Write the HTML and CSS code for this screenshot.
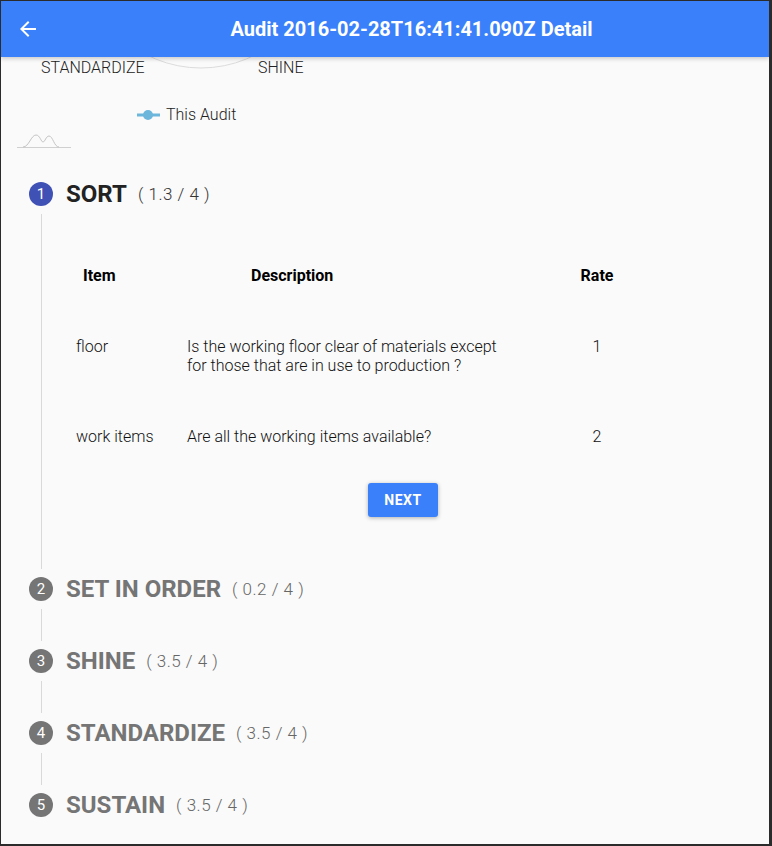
FILE: index.html
```html
<!DOCTYPE html>
<html>
<head>
<meta charset="utf-8">
<link rel="stylesheet" href="styles.css">
</head>
<body>
<div class="app">
  <header class="appbar">
    <button class="back" aria-label="Back">
      <svg viewBox="0 0 24 24" width="24" height="24"><path fill="#fff" d="M20 11H7.83l5.59-5.59L12 4l-8 8 8 8 1.41-1.41L7.83 13H20v-2z"/></svg>
    </button>
    <h1 class="title">Audit 2016-02-28T16:41:41.090Z Detail</h1>
  </header>
  <main class="content">
    <section class="chart">
      <svg class="chart-svg" width="768" height="125" viewBox="0 0 768 125">
        <circle cx="200" cy="-108" r="119" fill="none" stroke="#dcdcdc" stroke-width="1"/>
        <text x="40" y="16" class="axis-label">STANDARDIZE</text>
        <text x="257" y="16" class="axis-label">SHINE</text>
        <line x1="136" y1="58" x2="159" y2="58" stroke="#6cb6dc" stroke-width="3"/>
        <circle cx="147" cy="58" r="5" fill="#6cb6dc"/>
        <text x="165" y="63" class="legend-label">This Audit</text>
        <line x1="16" y1="90.5" x2="70" y2="90.5" stroke="#d0d0d0" stroke-width="1"/>
        <path d="M22 90 C28 90 30 78 35 78 C39 78 40 85 42 85 C44 85 45 79 48 79 C52 79 53 90 58 90" fill="none" stroke="#c4c4c4" stroke-width="1"/>
      </svg>
    </section>

    <ol class="stepper">
      <li class="step active">
        <div class="step-head">
          <span class="step-icon">1</span>
          <span class="step-name">SORT</span>
          <span class="step-score">( 1.3 / 4 )</span>
        </div>
        <div class="step-body">
          <div class="audit-table">
            <div class="row head">
              <div class="c-item">Item</div>
              <div class="c-desc">Description</div>
              <div class="c-rate">Rate</div>
            </div>
            <div class="row">
              <div class="c-item">floor</div>
              <div class="c-desc">Is the working floor clear of materials except for those that are in use to production ?</div>
              <div class="c-rate">1</div>
            </div>
            <div class="row">
              <div class="c-item">work items</div>
              <div class="c-desc">Are all the working items available?</div>
              <div class="c-rate">2</div>
            </div>
          </div>
          <div class="actions">
            <button class="next">NEXT</button>
          </div>
        </div>
      </li>
      <li class="step">
        <div class="step-head">
          <span class="step-icon">2</span>
          <span class="step-name">SET IN ORDER</span>
          <span class="step-score">( 0.2 / 4 )</span>
        </div>
        <div class="connector"></div>
      </li>
      <li class="step">
        <div class="step-head">
          <span class="step-icon">3</span>
          <span class="step-name">SHINE</span>
          <span class="step-score">( 3.5 / 4 )</span>
        </div>
        <div class="connector"></div>
      </li>
      <li class="step">
        <div class="step-head">
          <span class="step-icon">4</span>
          <span class="step-name">STANDARDIZE</span>
          <span class="step-score">( 3.5 / 4 )</span>
        </div>
        <div class="connector"></div>
      </li>
      <li class="step">
        <div class="step-head">
          <span class="step-icon">5</span>
          <span class="step-name">SUSTAIN</span>
          <span class="step-score">( 3.5 / 4 )</span>
        </div>
      </li>
    </ol>
  </main>
</div>
</body>
</html>
```

FILE: styles.css
```css
* { box-sizing: border-box; }
html, body { margin: 0; padding: 0; }
body {
  background: #2b2b2b;
  font-family: Roboto, "Liberation Sans", Arial, sans-serif;
  width: 772px;
  height: 846px;
  overflow: hidden;
}
.app {
  margin: 1px 3px 2px 1px;
  width: 768px;
  height: 843px;
  background: #fafafa;
  overflow: hidden;
  display: flex;
  flex-direction: column;
}
.appbar {
  position: relative;
  z-index: 2;
  height: 56px;
  flex: none;
  background: #3a80fa;
  display: flex;
  align-items: center;
  box-shadow: 0 2px 4px rgba(0,0,0,0.18);
}
.back {
  width: 24px;
  height: 24px;
  margin-left: 15px;
  padding: 0;
  border: 0;
  background: none;
  display: flex;
}
.title {
  flex: 1;
  margin: 0;
  padding-left: 14px;
  text-align: center;
  color: #fff;
  font-size: 20px;
  font-weight: 700;
}
.content {
  flex: 1;
  overflow: hidden;
}
.chart { height: 125px; }
.chart-svg { display: block; }
.axis-label { font-family: Roboto, sans-serif; font-size: 16px; font-weight: 300; fill: #222; }
.legend-label { font-family: Roboto, sans-serif; font-size: 16px; font-weight: 300; fill: #222; }

.stepper {
  list-style: none;
  margin: 0;
  padding: 0 0 0 28px;
}
.step-head {
  display: flex;
  align-items: center;
  height: 24px;
}
.step-icon {
  width: 24px;
  height: 24px;
  border-radius: 50%;
  background: #757575;
  color: #fff;
  font-size: 15px;
  display: flex;
  align-items: center;
  justify-content: center;
  flex: none;
}
.step.active .step-icon { background: #3f51b5; }
.step-name {
  margin-left: 13px;
  font-size: 24px;
  font-weight: 700;
  color: #757575;
}
.step.active .step-name { color: #222; }
.step-score {
  margin-left: 11px;
  font-size: 17px;
  font-weight: 300;
  color: #666;
  letter-spacing: 0.5px;
}
.step.active .step-score { color: #333; }

.connector {
  margin: 8px 0 8px 12px;
  height: 32px;
  border-left: 1px solid #d9d9d9;
}
.step-body {
  margin: 8px 0 8px 12px;
  border-left: 1px solid #d9d9d9;
  padding: 26px 0 52px 34px;
}
.audit-table { width: 620px; }
.row {
  display: grid;
  grid-template-columns: 111px 330px 160px;
  padding: 26px 0;
  font-size: 16px;
  line-height: 19px;
  font-weight: 300;
  color: #111;
}
.row .c-desc { padding-right: 10px; }
.row .c-rate { text-align: center; }
.row.head { font-weight: 700; color: #000; font-size: 16px; }
.row.head .c-item { padding-left: 7px; }
.row.head .c-desc { padding-left: 64px; }
.actions {
  display: flex;
  padding-left: 292px;
  margin-top: 11px;
}
.next {
  width: 70px;
  height: 34px;
  border: 0;
  border-radius: 3px;
  background: #3a80fa;
  color: #fff;
  font-family: Roboto, sans-serif;
  font-size: 14px;
  font-weight: 700;
  letter-spacing: 0.5px;
  box-shadow: 0 1px 4px rgba(0,0,0,0.3);
}
```
